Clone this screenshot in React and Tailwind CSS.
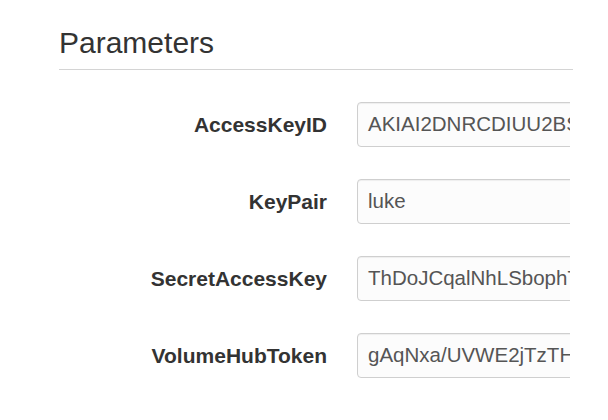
const params = [
    { name: 'AccessKeyID', value: 'AKIAI2DNRCDIUU2BSQ7A' },
    { name: 'KeyPair', value: 'luke' },
    { name: 'SecretAccessKey', value: 'ThDoJCqalNhLSbophTi9Xk' },
    { name: 'VolumeHubToken', value: 'gAqNxa/UVWE2jTzTHkQp' },
];

const App = () => {
    return (
        <div className="h-[420px] w-[608px] bg-white pl-[59px] pt-[24px] text-[#333]" style={{ fontFamily: '"Liberation Sans", Arial, sans-serif' }}>
            <h2 className="text-[30px] leading-[38px] text-[#333]">Parameters</h2>
            <div className="mt-[7px] h-px w-[514px] bg-[#d4d4d4]" />

            {/* Form rows, clipped at the right edge like the source */}
            <div className="mt-[32px] w-[511px] overflow-hidden">
                <div className="flex flex-col gap-[32px]">
                    {params.map((p) => (
                        <div key={p.name} className="flex items-center gap-[30px]">
                            <label className="w-[268px] shrink-0 text-right text-[21px] font-bold text-[#333]">
                                {p.name}
                            </label>
                            <div className="flex h-[45px] w-[300px] shrink-0 items-center rounded-[4px] border border-[#cfcfcf] bg-[#fcfcfc] pl-[10px] text-[20.5px] whitespace-nowrap text-[#555] shadow-[inset_0_1px_1px_rgba(0,0,0,0.06)]">
                                {p.value}
                            </div>
                        </div>
                    ))}
                </div>
            </div>
        </div>
    );
};

export default App;
